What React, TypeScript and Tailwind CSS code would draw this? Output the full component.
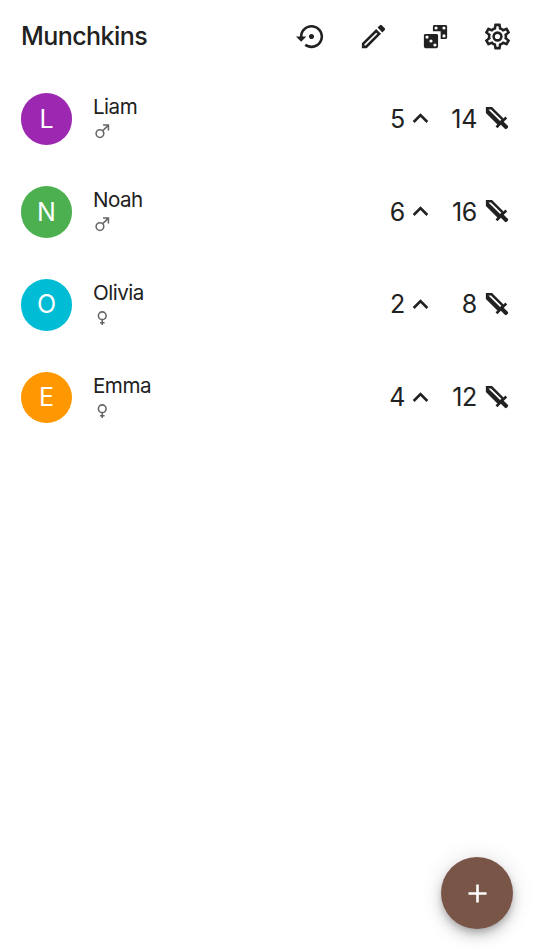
type Player = {
  name: string
  gender: "male" | "female"
  level: number
  strength: number
  color: string
}

const players: Player[] = [
  { name: "Liam", gender: "male", level: 5, strength: 14, color: "bg-[#9c27b0]" },
  { name: "Noah", gender: "male", level: 6, strength: 16, color: "bg-[#4caf50]" },
  { name: "Olivia", gender: "female", level: 2, strength: 8, color: "bg-[#00bcd4]" },
  { name: "Emma", gender: "female", level: 4, strength: 12, color: "bg-[#ff9800]" },
]

const icons = {
  restore:
    "M14 12c0-1.1-.9-2-2-2s-2 .9-2 2 .9 2 2 2 2-.9 2-2zm-2-9c-4.97 0-9 4.03-9 9H0l4 4 4-4H5c0-3.87 3.13-7 7-7s7 3.13 7 7-3.13 7-7 7c-1.51 0-2.91-.49-4.06-1.3l-1.42 1.44C8.04 20.3 9.94 21 12 21c4.97 0 9-4.03 9-9s-4.03-9-9-9z",
  pencil:
    "M14.06 9L15 9.94 5.92 19H5v-.92L14.06 9m3.6-6c-.25 0-.51.1-.7.29l-1.83 1.83 3.75 3.75 1.83-1.83c.39-.39.39-1.04 0-1.41l-2.34-2.34c-.2-.2-.45-.29-.71-.29m-3.6 3.19L3 17.25V21h3.75L17.81 9.94l-3.75-3.75z",
  dice:
    "M19.78 3H11.22C10.55 3 10 3.55 10 4.22V8H16V14H19.78C20.45 14 21 13.45 21 12.78V4.22C21 3.55 20.45 3 19.78 3ZM12.44 4.21a1.23 1.23 0 1 1 0 2.46a1.23 1.23 0 1 1 0-2.46ZM18.56 4.21a1.23 1.23 0 1 1 0 2.46a1.23 1.23 0 1 1 0-2.46ZM18.56 10.32a1.23 1.23 0 1 1 0 2.46a1.23 1.23 0 1 1 0-2.46ZM4.22 10H12.78A1.22 1.22 0 0 1 14 11.22V19.78C14 20.45 13.45 21 12.78 21H4.22C3.55 21 3 20.45 3 19.78V11.22C3 10.55 3.55 10 4.22 10ZM5.44 11.21a1.23 1.23 0 1 0 0 2.46a1.23 1.23 0 1 0 0-2.46ZM8.5 14.27a1.23 1.23 0 1 0 0 2.46a1.23 1.23 0 1 0 0-2.46ZM11.56 17.33a1.23 1.23 0 1 0 0 2.46a1.23 1.23 0 1 0 0-2.46Z",
  cog:
    "M12,8A4,4 0 0,1 16,12A4,4 0 0,1 12,16A4,4 0 0,1 8,12A4,4 0 0,1 12,8M12,10A2,2 0 0,0 10,12A2,2 0 0,0 12,14A2,2 0 0,0 14,12A2,2 0 0,0 12,10M10,22C9.75,22 9.54,21.82 9.5,21.58L9.13,18.93C8.5,18.68 7.96,18.34 7.44,17.94L4.95,18.95C4.73,19.03 4.46,18.95 4.34,18.73L2.34,15.27C2.21,15.05 2.27,14.78 2.46,14.63L4.57,12.97L4.5,12L4.57,11L2.46,9.37C2.27,9.22 2.21,8.95 2.34,8.73L4.34,5.27C4.46,5.05 4.73,4.96 4.95,5.05L7.44,6.05C7.96,5.66 8.5,5.32 9.13,5.07L9.5,2.42C9.54,2.18 9.75,2 10,2H14C14.25,2 14.46,2.18 14.5,2.42L14.87,5.07C15.5,5.32 16.04,5.66 16.56,6.05L19.05,5.05C19.27,4.96 19.54,5.05 19.66,5.27L21.66,8.73C21.79,8.95 21.73,9.22 21.54,9.37L19.43,11L19.5,12L19.43,13L21.54,14.63C21.73,14.78 21.79,15.05 21.66,15.27L19.66,18.73C19.54,18.95 19.27,19.04 19.05,18.95L16.56,17.95C16.04,18.34 15.5,18.68 14.87,18.93L14.5,21.58C14.46,21.82 14.25,22 14,22H10M11.25,4L10.88,6.61C9.68,6.86 8.62,7.5 7.85,8.39L5.44,7.35L4.69,8.65L6.8,10.2C6.4,11.37 6.4,12.64 6.8,13.8L4.68,15.36L5.43,16.66L7.86,15.62C8.63,16.5 9.68,17.14 10.87,17.38L11.24,20H12.76L13.13,17.39C14.32,17.14 15.37,16.5 16.14,15.62L18.57,16.66L19.32,15.36L17.2,13.81C17.6,12.64 17.6,11.37 17.2,10.2L19.31,8.65L18.56,7.35L16.15,8.39C15.38,7.5 14.32,6.86 13.12,6.62L12.75,4H11.25Z",
  male:
    "M9,9C10.29,9 11.5,9.41 12.47,10.11L17.58,5H13V3H21V11H19V6.41L13.89,11.5C14.59,12.5 15,13.7 15,15A6,6 0 0,1 9,21A6,6 0 0,1 3,15A6,6 0 0,1 9,9M9,11A4,4 0 0,0 5,15A4,4 0 0,0 9,19A4,4 0 0,0 13,15A4,4 0 0,0 9,11Z",
  female:
    "M12,4A6,6 0 0,1 18,10C18,12.97 15.84,15.44 13,15.92V18H15V20H13V22H11V20H9V18H11V15.92C8.16,15.44 6,12.97 6,10A6,6 0 0,1 12,4M12,6A4,4 0 0,0 8,10A4,4 0 0,0 12,14A4,4 0 0,0 16,10A4,4 0 0,0 12,6Z",
  chevronUp: "M7.41,15.41L12,10.83L16.59,15.41L18,14L12,8L6,14L7.41,15.41Z",
  sword:
    "M6.92,5H5L14,14L15,13.06M19.96,19.12L19.12,19.96C18.73,20.35 18.1,20.35 17.71,19.96L14.59,16.84L11.91,19.5L10.5,18.09L11.92,16.67L3,7.75V3H7.75L16.67,11.92L18.09,10.5L19.5,11.91L16.83,14.58L19.95,17.7C20.35,18.1 20.35,18.73 19.96,19.12Z",
  plus: "M19 13h-6v6h-2v-6H5v-2h6V5h2v6h6v2z",
}

const Icon = ({ name, className = "size-[31px]" }: { name: keyof typeof icons; className?: string }) => (
  <svg viewBox="0 0 24 24" fill="currentColor" className={`shrink-0 ${className}`} aria-hidden="true">
    <path d={icons[name]} />
  </svg>
)

const Header = () => (
  <header className="flex h-[72.5px] items-center justify-between px-[21px]">
    <h1 className="pt-px text-[25px] font-medium tracking-[-0.55px]">Munchkins</h1>
    <div className="flex items-center gap-[31px]">
      <button aria-label="Reset"><Icon name="restore" /></button>
      <button aria-label="Edit"><Icon name="pencil" /></button>
      <button aria-label="Dice"><Icon name="dice" /></button>
      <button aria-label="Settings"><Icon name="cog" /></button>
    </div>
  </header>
)

const PlayerRow = ({ player }: { player: Player }) => (
  <li className="flex h-[92.9px] items-center pr-[21px] pl-[20.7px]">
    <div className={`flex size-[51.6px] shrink-0 items-center justify-center rounded-full pt-px text-[25px] text-white ${player.color}`}>
      {player.name[0]}
    </div>
    <div className="ml-[20.7px] flex-1 pb-[4px]">
      <p className="text-[20.6px] leading-[28px] tracking-[-0.5px]">{player.name}</p>
      <Icon name={player.gender} className="mt-px size-[18.5px] text-[#666]" />
    </div>
    <div className="flex items-center text-[25px] tracking-[-0.3px]">
      <span className="pt-px">{player.level}</span>
      <Icon name="chevronUp" />
    </div>
    <div className="flex w-[77px] items-center justify-end gap-[5px] text-[25px] tracking-[-0.3px]">
      <span className="pt-px">{player.strength}</span>
      <Icon name="sword" />
    </div>
  </li>
)

const App = () => {
  return (
    <div className="relative h-[950px] w-full overflow-hidden bg-white font-['Inter','Liberation_Sans',sans-serif] text-[#212121]">
      <Header />
      <ul>
        {players.map((player) => (
          <PlayerRow key={player.name} player={player} />
        ))}
      </ul>
      <button
        aria-label="Add player"
        className="absolute right-[21px] bottom-[21px] flex size-[72px] items-center justify-center rounded-full bg-[#795548] text-white shadow-[0_4px_6px_-1px_rgba(0,0,0,0.2),0_8px_13px_0_rgba(0,0,0,0.14),0_1px_23px_0_rgba(0,0,0,0.12)]"
      >
        <Icon name="plus" />
      </button>
    </div>
  )
}

export default App
